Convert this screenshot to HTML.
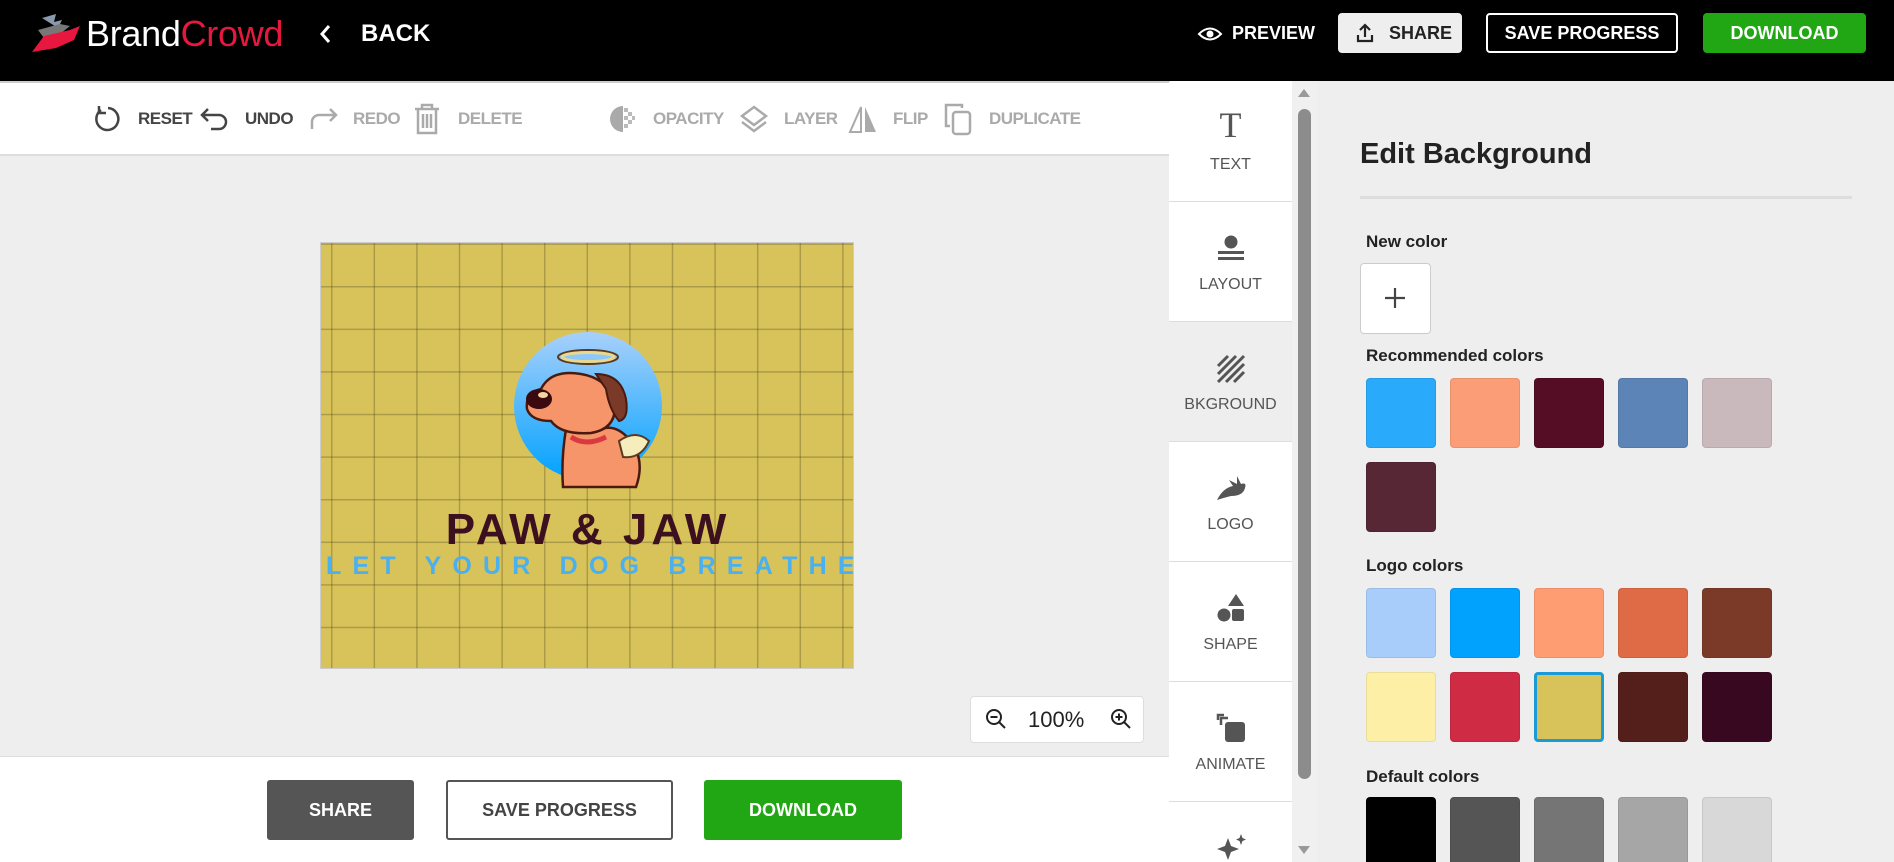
<!DOCTYPE html>
<html style="overflow:hidden;width:1894px;height:862px"><head><meta charset="utf-8"><style>
*{margin:0;padding:0;box-sizing:border-box}
body{width:1894px;height:862px;overflow:hidden;background:#eee;font-family:"Liberation Sans",sans-serif;position:relative}
.a{position:absolute}
.hdr{left:0;top:0;width:1894px;height:81px;background:#000}
.tb{font-size:17px;font-weight:bold;top:109px;color:#444;letter-spacing:-0.5px}
.tb.g{color:#aaa}
.sw{position:absolute;width:70px;height:70px;border-radius:4px;border:1px solid rgba(0,0,0,0.08)}
.lbl{position:absolute;left:1366px;font-size:17px;font-weight:bold;color:#222}
.si{position:absolute;left:1169px;width:123px;height:120px;border-bottom:1px solid #ddd;background:#fff;text-align:center;overflow:hidden}
.si span{position:absolute;left:0;right:0;top:74px;font-size:16px;color:#555}
</style></head><body>
<div class="a hdr"></div>
<svg class="a" style="left:30px;top:12px" width="60" height="44" viewBox="0 0 60 44">
<path d="M12 6 L26 2 L24 10 L32 8 L28 16 Z" fill="#8a9aac"/>
<path d="M8 18 L30 12 L40 14 L30 22 L14 26 Z" fill="#777"/>
<path d="M2 40 L14 24 L40 18 L50 14 L44 28 L26 36 Z" fill="#e8173f"/>
</svg>
<div class="a" style="left:86px;top:13px;font-size:36px;color:#fff;letter-spacing:-0.3px">Brand<span style="color:#e8173f">Crowd</span></div>
<svg class="a" style="left:318px;top:23px" width="14" height="22" viewBox="0 0 14 22"><path d="M11 3 L4 11 L11 19" stroke="#fff" stroke-width="3" fill="none"/></svg>
<div class="a" style="left:361px;top:20px;font-size:24px;font-weight:bold;color:#fff">BACK</div>
<svg class="a" style="left:1197px;top:25px" width="26" height="18" viewBox="0 0 26 18"><path d="M2 9 Q13 -2 24 9 Q13 20 2 9Z" stroke="#fff" stroke-width="2" fill="none"/><circle cx="13" cy="9" r="3.5" fill="#fff"/></svg>
<div class="a" style="left:1232px;top:23px;font-size:18px;font-weight:bold;color:#fff">PREVIEW</div>
<div class="a" style="left:1338px;top:13px;width:124px;height:40px;background:#eee;border-radius:4px"></div>
<svg class="a" style="left:1355px;top:22px" width="20" height="22" viewBox="0 0 20 22"><path d="M10 15 V3 M5 8 L10 3 L15 8 M3 13 V19 H17 V13" stroke="#222" stroke-width="2.2" fill="none"/></svg>
<div class="a" style="left:1389px;top:23px;font-size:18px;font-weight:bold;color:#222">SHARE</div>
<div class="a" style="left:1486px;top:13px;width:192px;height:40px;border:2px solid #fff;border-radius:4px;color:#fff;font-size:18px;font-weight:bold;text-align:center;line-height:36px">SAVE PROGRESS</div>
<div class="a" style="left:1703px;top:13px;width:163px;height:40px;background:#22a714;border-radius:4px;color:#fff;font-size:18px;font-weight:bold;text-align:center;line-height:40px">DOWNLOAD</div>
<div class="a" style="left:0;top:81px;width:1169px;height:75px;background:#fff;border-top:2px solid #ccc;border-bottom:2px solid #ddd"></div>
<svg class="a" style="left:93px;top:104px" width="30" height="30" viewBox="0 0 30 30"><path d="M8 6 A11 11 0 1 0 15 4" stroke="#444" stroke-width="2.5" fill="none"/><path d="M6 2 V9 H13" stroke="#444" stroke-width="2.5" fill="none"/></svg>
<div class="a tb" style="left:138px">RESET</div>
<svg class="a" style="left:199px;top:106px" width="32" height="26" viewBox="0 0 32 26"><path d="M9 3 L3 9 L9 15 M3 9 H20 A7 7 0 0 1 20 23 H12" stroke="#444" stroke-width="2.5" fill="none"/></svg>
<div class="a tb" style="left:245px">UNDO</div>
<svg class="a" style="left:307px;top:106px" width="32" height="26" viewBox="0 0 32 26"><path d="M23 3 L29 9 L23 15 M29 9 H12 A7 7 0 0 0 5 16 V23" stroke="#aaa" stroke-width="2.5" fill="none"/></svg>
<div class="a tb g" style="left:353px">REDO</div>
<svg class="a" style="left:412px;top:102px" width="30" height="34" viewBox="0 0 30 34"><path d="M3 7 H27 M10 7 V3 H20 V7 M6 7 V31 H24 V7 M11 12 V26 M15 12 V26 M19 12 V26" stroke="#aaa" stroke-width="2.5" fill="none"/></svg>
<div class="a tb g" style="left:458px">DELETE</div>
<svg class="a" style="left:608px;top:104px" width="30" height="30" viewBox="0 0 30 30"><path d="M15 2 A13 13 0 0 0 15 28 Z" fill="#aaa"/><g fill="#bbb"><rect x="16" y="4" width="4" height="4"/><rect x="20" y="8" width="4" height="4"/><rect x="16" y="12" width="4" height="4"/><rect x="20" y="16" width="4" height="4"/><rect x="16" y="20" width="4" height="4"/><rect x="24" y="12" width="3" height="4"/></g></svg>
<div class="a tb g" style="left:653px">OPACITY</div>
<svg class="a" style="left:739px;top:104px" width="30" height="30" viewBox="0 0 30 30"><path d="M15 3 L27 12 L15 21 L3 12 Z M3 18 L15 27 L27 18" stroke="#aaa" stroke-width="2.5" fill="none"/></svg>
<div class="a tb g" style="left:784px">LAYER</div>
<svg class="a" style="left:847px;top:104px" width="32" height="30" viewBox="0 0 32 30"><path d="M14 3 L3 28 H14 Z" stroke="#aaa" stroke-width="2" fill="none"/><path d="M18 3 L29 28 H18 Z" fill="#aaa"/></svg>
<div class="a tb g" style="left:893px">FLIP</div>
<svg class="a" style="left:942px;top:102px" width="32" height="34" viewBox="0 0 32 34"><path d="M8 24 H4 V3 H20 V6" stroke="#aaa" stroke-width="2.5" fill="none"/><rect x="11" y="10" width="17" height="22" rx="3" stroke="#aaa" stroke-width="2.5" fill="none"/></svg>
<div class="a tb g" style="left:989px">DUPLICATE</div>
<div class="a" style="left:320px;top:242px;width:534px;height:427px;background:#d7c35a;border:1px solid #ccc;overflow:hidden;
background-image:linear-gradient(90deg,rgba(60,50,20,0.28) 1.5px,transparent 1.5px),linear-gradient(180deg,rgba(60,50,20,0.28) 1.5px,transparent 1.5px);background-size:42.6px 42.6px;background-position:10px 43px">
<svg class="a" style="left:190px;top:86px" width="160" height="162" viewBox="0 0 160 162">
<defs><linearGradient id="bg" x1="0" y1="0" x2="0" y2="1"><stop offset="0" stop-color="#a8d0fb"/><stop offset="1" stop-color="#00a2fe"/></linearGradient></defs>
<circle cx="77" cy="77" r="74" fill="url(#bg)"/>
<ellipse cx="77" cy="28" rx="30" ry="7" fill="none" stroke="#5a3a20" stroke-width="2"/><ellipse cx="77" cy="28" rx="26" ry="4.5" fill="none" stroke="#e8d890" stroke-width="3"/>
<path d="M55 100 Q50 130 52 158 H125 Q135 130 118 110 Q105 95 90 100 Z" fill="#f6946a" stroke="#4a1a10" stroke-width="2.5"/>
<path d="M30 60 Q40 40 70 45 Q100 50 104 78 Q104 100 80 104 Q50 106 40 92 Q20 92 16 80 Q14 64 30 60 Z" fill="#f6946a" stroke="#4a1a10" stroke-width="2.5"/>
<path d="M85 45 Q110 45 115 70 Q118 90 108 92 Q98 80 95 60 Z" fill="#7b3a28" stroke="#4a1a10" stroke-width="2"/>
<ellipse cx="28" cy="70" rx="13" ry="10" fill="#3a0a10"/><ellipse cx="32" cy="66" rx="5" ry="3" fill="#f3d6a0"/>
<path d="M60 108 Q75 118 95 108" stroke="#d83a40" stroke-width="5" fill="none"/>
<path d="M108 112 Q125 100 138 112 Q130 130 112 128 Z" fill="#f5eebc" stroke="#5a3a20" stroke-width="2"/>
</svg>
<div class="a" style="left:0;width:534px;top:262px;text-align:center;font-size:44px;font-weight:bold;color:#3d1020;letter-spacing:4px">PAW &amp; JAW</div>
<div class="a" style="left:5px;width:560px;top:309px;font-size:25px;font-weight:bold;color:#4ab0f0;letter-spacing:11.2px;white-space:nowrap">LET YOUR DOG BREATHE</div>
</div>
<div class="a" style="left:970px;top:696px;width:174px;height:47px;background:#fff;border:1px solid #ddd;border-radius:4px"></div>
<svg class="a" style="left:985px;top:708px" width="22" height="22" viewBox="0 0 22 22"><circle cx="9" cy="9" r="7" stroke="#222" stroke-width="2" fill="none"/><path d="M14 14 L20 20 M5.5 9 H12.5" stroke="#222" stroke-width="2"/></svg>
<div class="a" style="left:1028px;top:707px;font-size:22px;color:#222">100%</div>
<svg class="a" style="left:1110px;top:708px" width="22" height="22" viewBox="0 0 22 22"><circle cx="9" cy="9" r="7" stroke="#222" stroke-width="2" fill="none"/><path d="M14 14 L20 20 M5.5 9 H12.5 M9 5.5 V12.5" stroke="#222" stroke-width="2"/></svg>
<div class="a" style="left:0;top:756px;width:1169px;height:106px;background:#fff;border-top:1px solid #ddd"></div>
<div class="a" style="left:267px;top:780px;width:147px;height:60px;background:#555;border-radius:3px;color:#fff;font-size:18px;font-weight:bold;text-align:center;line-height:60px">SHARE</div>
<div class="a" style="left:446px;top:780px;width:227px;height:60px;border:2px solid #555;border-radius:3px;color:#444;font-size:18px;font-weight:bold;text-align:center;line-height:56px">SAVE PROGRESS</div>
<div class="a" style="left:704px;top:780px;width:198px;height:60px;background:#22a714;border-radius:3px;color:#fff;font-size:18px;font-weight:bold;text-align:center;line-height:60px">DOWNLOAD</div>
<div class="a" style="left:1169px;top:81px;width:123px;height:781px;background:#fff;border-left:1px solid #ddd"></div>
<div class="si" style="top:82px"><div class="a" style="left:0;right:0;top:22px;font-family:'Liberation Serif',serif;font-size:36px;color:#555">T</div><span>TEXT</span></div>
<div class="si" style="top:202px"><svg class="a" style="left:47px;top:32px" width="30" height="30" viewBox="0 0 30 30"><circle cx="15" cy="8" r="6.5" fill="#555"/><rect x="2" y="17" width="26" height="3" fill="#555"/><rect x="2" y="23" width="26" height="3" fill="#555"/></svg><span>LAYOUT</span></div>
<div class="si" style="top:322px;background:#eee"><svg class="a" style="left:47px;top:32px" width="30" height="30" viewBox="0 0 30 30"><path d="M2 12 L12 2 M2 20 L20 2 M2 28 L28 2 M10 28 L28 10 M18 28 L28 18" stroke="#555" stroke-width="3"/></svg><span>BKGROUND</span></div>
<div class="si" style="top:442px"><svg class="a" style="left:46px;top:32px" width="32" height="30" viewBox="0 0 32 30"><path d="M2 26 Q8 14 18 12 L14 6 L22 10 L22 2 L26 10 Q32 8 30 14 Q28 22 16 22 Q8 24 2 26Z" fill="#555"/></svg><span>LOGO</span></div>
<div class="si" style="top:562px"><svg class="a" style="left:47px;top:30px" width="30" height="32" viewBox="0 0 30 32"><path d="M20 2 L28 14 H12 Z" fill="#555"/><circle cx="8" cy="23" r="6.5" fill="#555"/><rect x="16" y="17" width="12" height="12" rx="2" fill="#555"/></svg><span>SHAPE</span></div>
<div class="si" style="top:682px"><svg class="a" style="left:47px;top:30px" width="32" height="32" viewBox="0 0 32 32"><path d="M2 8 V3 H8 M5 13 V6 H12" stroke="#555" stroke-width="2.5" fill="none"/><rect x="9" y="10" width="20" height="20" rx="3" fill="#555"/></svg><span>ANIMATE</span></div>
<div class="si" style="top:802px;height:60px;border-bottom:none"><svg class="a" style="left:47px;top:30px" width="32" height="30" viewBox="0 0 32 30"><path d="M12 6 L15 14 L23 17 L15 20 L12 28 L9 20 L1 17 L9 14Z M25 2 L26.5 6 L30 7.5 L26.5 9 L25 13 L23.5 9 L20 7.5 L23.5 6Z" fill="#555"/></svg></div>
<div class="a" style="left:1292px;top:81px;width:25px;height:781px;background:#f0f0f0"></div>
<svg class="a" style="left:1297px;top:88px" width="14" height="10"><path d="M1 9 L7 1 L13 9Z" fill="#999"/></svg>
<div class="a" style="left:1298px;top:109px;width:13px;height:670px;background:#8c8c8c;border-radius:7px"></div>
<svg class="a" style="left:1297px;top:845px" width="14" height="10"><path d="M1 1 L7 9 L13 1Z" fill="#999"/></svg>
<div class="a" style="left:1360px;top:138px;font-size:29px;font-weight:bold;color:#222">Edit Background</div>
<div class="a" style="left:1360px;top:196px;width:492px;height:3px;background:#ddd"></div>
<div class="lbl" style="top:232px">New color</div>
<div class="a" style="left:1360px;top:263px;width:71px;height:71px;background:#fff;border:1px solid #ccc;border-radius:4px"></div>
<svg class="a" style="left:1383px;top:286px" width="24" height="24"><path d="M12 2 V22 M2 12 H22" stroke="#444" stroke-width="2.2"/></svg>
<div class="lbl" style="top:346px">Recommended colors</div>
<div class="sw" style="left:1366px;top:378px;background:#29aafa"></div>
<div class="sw" style="left:1450px;top:378px;background:#fb9d76"></div>
<div class="sw" style="left:1534px;top:378px;background:#540d24"></div>
<div class="sw" style="left:1618px;top:378px;background:#5d84b6"></div>
<div class="sw" style="left:1702px;top:378px;background:#c9b9bd"></div>
<div class="sw" style="left:1366px;top:462px;background:#572736"></div>
<div class="lbl" style="top:556px">Logo colors</div>
<div class="sw" style="left:1366px;top:588px;background:#a9cdfb"></div>
<div class="sw" style="left:1450px;top:588px;background:#00a2fe"></div>
<div class="sw" style="left:1534px;top:588px;background:#fe9c72"></div>
<div class="sw" style="left:1618px;top:588px;background:#de6b46"></div>
<div class="sw" style="left:1702px;top:588px;background:#7b3a28"></div>
<div class="sw" style="left:1366px;top:672px;background:#fdf0a6"></div>
<div class="sw" style="left:1450px;top:672px;background:#cf2b44"></div>
<div class="sw" style="left:1534px;top:672px;background:#d7c35a;border:3px solid #1a9ad6"></div>
<div class="sw" style="left:1618px;top:672px;background:#541f1a"></div>
<div class="sw" style="left:1702px;top:672px;background:#380820"></div>
<div class="lbl" style="top:767px">Default colors</div>
<div class="sw" style="left:1366px;top:797px;background:#000"></div>
<div class="sw" style="left:1450px;top:797px;background:#555"></div>
<div class="sw" style="left:1534px;top:797px;background:#757575"></div>
<div class="sw" style="left:1618px;top:797px;background:#a6a6a6"></div>
<div class="sw" style="left:1702px;top:797px;background:#d8d8d8"></div>
</body></html>
